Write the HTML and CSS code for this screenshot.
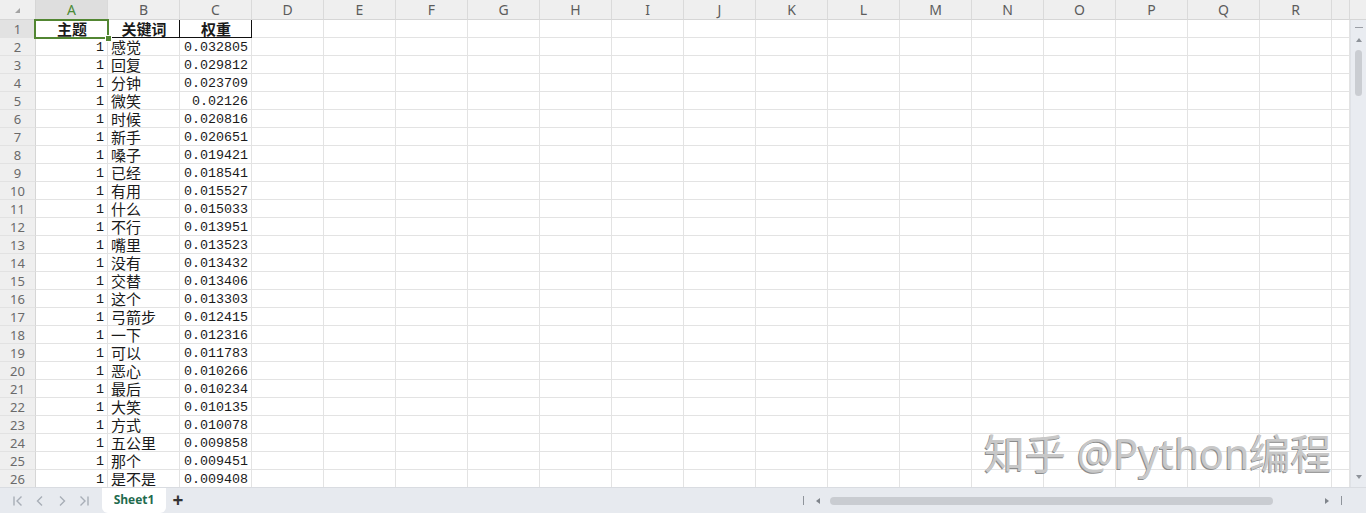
FILE: index.html
```html
<!DOCTYPE html>
<html>
<head>
    <title>Sheet1</title>
    <link rel="stylesheet" href="styles.css">
</head>
<body>
    <div class="wrap">
        <div class="sheet" id="sheet"></div>

        <!-- selected cell A1 -->
        <div class="selection"><span class="handle"></span></div>

        <div class="watermark">知乎 @Python编程</div>
    </div>

    <div class="bottombar">
        <div class="nav">
            <span class="navbtn"><svg width="12" height="12" viewBox="0 0 12 12"><path d="M2 1.5v9M9.5 1.5L5 6l4.5 4.5" fill="none" stroke="#a8aeb7" stroke-width="1.4"/></svg></span>
            <span class="navbtn"><svg width="12" height="12" viewBox="0 0 12 12"><path d="M8 1.5L3.5 6 8 10.5" fill="none" stroke="#a8aeb7" stroke-width="1.4"/></svg></span>
            <span class="navbtn"><svg width="12" height="12" viewBox="0 0 12 12"><path d="M4 1.5L8.5 6 4 10.5" fill="none" stroke="#a8aeb7" stroke-width="1.4"/></svg></span>
            <span class="navbtn"><svg width="12" height="12" viewBox="0 0 12 12"><path d="M2.5 1.5L7 6l-4.5 4.5M10 1.5v9" fill="none" stroke="#a8aeb7" stroke-width="1.4"/></svg></span>
        </div>
        <div class="tab">Sheet1</div>
        <div class="addtab">+</div>

        <div class="hscroll">
            <span class="tick"></span>
            <span class="harrow left"></span>
            <span class="hthumb"></span>
            <span class="harrow right"></span>
            <span class="tick"></span>
        </div>
    </div>

    <script>
        // sheet data: topic, keyword, weight
        const words = [
            ['感觉', '0.032805'], ['回复', '0.029812'], ['分钟', '0.023709'],
            ['微笑', '0.02126'], ['时候', '0.020816'], ['新手', '0.020651'],
            ['嗓子', '0.019421'], ['已经', '0.018541'], ['有用', '0.015527'],
            ['什么', '0.015033'], ['不行', '0.013951'], ['嘴里', '0.013523'],
            ['没有', '0.013432'], ['交替', '0.013406'], ['这个', '0.013303'],
            ['弓箭步', '0.012415'], ['一下', '0.012316'], ['可以', '0.011783'],
            ['恶心', '0.010266'], ['最后', '0.010234'], ['大笑', '0.010135'],
            ['方式', '0.010078'], ['五公里', '0.009858'], ['那个', '0.009451'],
            ['是不是', '0.009408']
        ];
        const letters = 'ABCDEFGHIJKLMNOPQR'.split('');
        const sheet = document.getElementById('sheet');
        let html = '<div class="corner"><span class="tri"></span></div>';

        letters.forEach(l => {
            html += `<div class="colhead${l === 'A' ? ' active' : ''}">${l}</div>`;
        });
        html += '<div class="colhead"></div><div class="colhead blank"></div>';

        // vertical scrollbar sits in the last column, under the header
        html += `<div class="vscroll">
                    <span class="vdash"></span>
                    <span class="varrow up"></span>
                    <span class="vthumb"></span>
                    <span class="varrow down"></span>
                 </div>`;

        for (let r = 1; r <= 27; r++) {
            html += `<div class="rowhead${r === 1 ? ' active' : ''}">${r}</div>`;
            for (let c = 0; c < 19; c++) {
                let cls = 'cell';
                let text = '';
                if (r === 1 && c < 3) {
                    cls += ' head';
                    text = ['主题', '关键词', '权重'][c];
                } else if (r > 1 && words[r - 2] && c < 3) {
                    if (c === 0) { cls += ' num'; text = '1'; }
                    if (c === 1) { text = words[r - 2][0]; }
                    if (c === 2) { cls += ' num'; text = words[r - 2][1]; }
                }
                html += `<div class="${cls}">${text}</div>`;
            }
        }
        sheet.innerHTML = html;
    </script>
</body>
</html>
```

FILE: styles.css
```css
body {
    margin: 0;
    width: 1366px;
    height: 513px;
    overflow: hidden;
    background: #fff;
    font-family: "Noto Sans", "Noto Sans CJK SC", sans-serif;
}
.wrap {
    position: relative;
    height: 487px;
    overflow: hidden;
}
.sheet {
    display: grid;
    grid-template-columns: 36px repeat(18, 72px) 18px 16px;
    grid-template-rows: 20px;
    grid-auto-rows: 18px;
}
.sheet > div {
    box-sizing: border-box;
}
.corner {
    background: #efefef;
    border-right: 1px solid #d6d6d6;
    border-bottom: 1px solid #d6d6d6;
    display: flex;
    align-items: center;
    justify-content: center;
}
.tri {
    width: 0;
    height: 0;
    border-left: 5px solid transparent;
    border-bottom: 5px solid #a3a3a3;
    margin: 2px 0 0 0;
}
.colhead {
    background: #efefef;
    border-right: 1px solid #dadada;
    border-bottom: 1px solid #d6d6d6;
    color: #5c5c5c;
    font-size: 14px;
    line-height: 19px;
    text-align: center;
}
.colhead.active {
    background: #dedede;
    color: #4b8a36;
}
.colhead.blank {
    border-right: none;
}
.rowhead {
    background: #efefef;
    border-right: 1px solid #d6d6d6;
    border-bottom: 1px solid #e2e2e2;
    color: #6a6a6a;
    font-size: 13px;
    line-height: 18px;
    text-align: center;
}
.rowhead.active {
    background: #e2e2e2;
}
.cell {
    border-right: 1px solid #e3e3e3;
    border-bottom: 1px solid #e3e3e3;
    padding: 0 2px 0 3px;
    font-family: "Noto Sans CJK SC", sans-serif;
    font-size: 15px;
    line-height: 17px;
    color: #1a1a1a;
    white-space: nowrap;
}
.cell.num {
    text-align: right;
    font-family: "Liberation Mono", monospace;
    font-size: 13.33px;
    line-height: 15px;
    padding-top: 2px;
    padding-right: 3px;
}
.cell.head {
    font-weight: bold;
    text-align: center;
    border-right-color: #111;
    border-bottom-color: #111;
}
.vscroll {
    grid-column: 21;
    grid-row: 2 / span 27;
    background: #e9ecf1;
    border-left: 1px solid #dfe2e7;
    display: flex;
    flex-direction: column;
    align-items: center;
    position: relative;
}
.vdash {
    width: 8px;
    height: 1px;
    background: #9a9ea5;
    margin-top: 7px;
}
.varrow {
    width: 0;
    height: 0;
    border-left: 3px solid transparent;
    border-right: 3px solid transparent;
}
.varrow.up {
    border-bottom: 4px solid #8e939a;
    margin-top: 10px;
}
.varrow.down {
    border-top: 4px solid #8e939a;
    position: absolute;
    top: 455px;
}
.vthumb {
    width: 7px;
    height: 46px;
    border-radius: 4px;
    background: #cacdd2;
    margin-top: 8px;
}
.selection {
    position: absolute;
    left: 34px;
    top: 19px;
    width: 71px;
    height: 16px;
    border: 2px solid #528632;
}
.handle {
    position: absolute;
    right: -5px;
    bottom: -5px;
    width: 5px;
    height: 5px;
    background: #528632;
    border: 1px solid #fff;
}
.watermark {
    position: absolute;
    left: 984px;
    top: 421px;
    font-family: "Noto Sans", "Noto Sans CJK SC", sans-serif;
    font-size: 41px;
    color: #c8c8c8;
    text-shadow: -1px 1px 0 #8c8c8c;
    white-space: nowrap;
}
.bottombar {
    height: 26px;
    background: #e7eaef;
    border-top: 1px solid #d9dce1;
    box-sizing: border-box;
    display: flex;
    align-items: stretch;
    font-family: "Open Sans", sans-serif;
}
.nav {
    display: flex;
    align-items: center;
    padding-left: 7px;
}
.navbtn {
    width: 22px;
    display: flex;
    justify-content: center;
}
.tab {
    margin-left: 7px;
    width: 64px;
    background: #fff;
    border-radius: 0 0 6px 6px;
    color: #1f6b4e;
    font-weight: bold;
    font-size: 12px;
    line-height: 24px;
    text-align: center;
}
.addtab {
    width: 24px;
    text-align: center;
    font-size: 19px;
    font-weight: bold;
    line-height: 24px;
    color: #333;
}
.hscroll {
    margin-left: auto;
    width: 568px;
    display: flex;
    align-items: center;
}
.tick {
    width: 1px;
    height: 9px;
    background: #8f949b;
    margin-left: 5px;
}
.harrow {
    width: 0;
    height: 0;
    border-top: 3px solid transparent;
    border-bottom: 3px solid transparent;
}
.harrow.left {
    border-right: 4px solid #80858c;
    margin-left: 12px;
}
.harrow.right {
    border-left: 4px solid #80858c;
    margin-left: 52px;
}
.hthumb {
    width: 443px;
    height: 8px;
    border-radius: 4px;
    background: #c9ccd1;
    margin-left: 10px;
}
.hscroll .tick:last-child {
    margin-left: 12px;
}
```
